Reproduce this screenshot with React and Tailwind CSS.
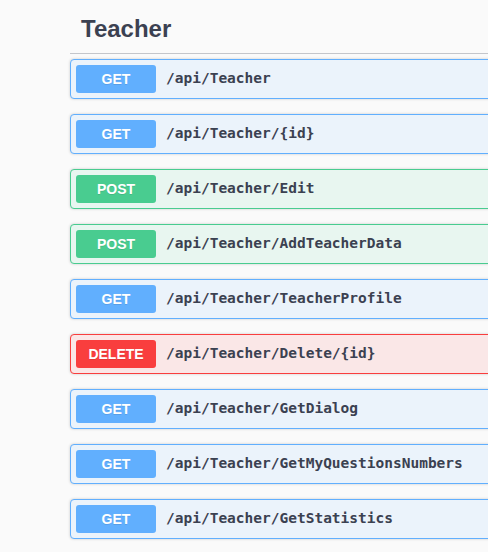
const ROUTES = [
  ['GET', '/api/Teacher'],
  ['GET', '/api/Teacher/{id}'],
  ['POST', '/api/Teacher/Edit'],
  ['POST', '/api/Teacher/AddTeacherData'],
  ['GET', '/api/Teacher/TeacherProfile'],
  ['DELETE', '/api/Teacher/Delete/{id}'],
  ['GET', '/api/Teacher/GetDialog'],
  ['GET', '/api/Teacher/GetMyQuestionsNumbers'],
  ['GET', '/api/Teacher/GetStatistics'],
]

const STYLES = {
  GET: { row: 'bg-[#ebf3fb] border-[#61affe]', badge: 'bg-[#61affe]' },
  POST: { row: 'bg-[#e8f6f0] border-[#49cc90]', badge: 'bg-[#49cc90]' },
  DELETE: { row: 'bg-[#fae7e7] border-[#f93e3e]', badge: 'bg-[#f93e3e]' },
}

export default function App() {
  return (
    <div className="w-[488px] h-[552px] overflow-hidden bg-[#fafafa]">
      <div className="w-[560px] pl-[70px]">
        <h3
          className="pt-[14px] pb-[10px] pl-[11px] text-[24px] leading-[29px] font-bold text-[#3b4151] border-b border-[#c4c6cb] mb-[5px]"
          style={{ fontFamily: '"Liberation Sans", Arial, sans-serif' }}
        >
          Teacher
        </h3>
        <div className="flex flex-col gap-[15px]">
          {ROUTES.map(([method, path]) => (
            <div
              key={path}
              className={`flex items-center p-[5px] border rounded-[4px] shadow-[0_0_3px_rgba(0,0,0,0.19)] ${STYLES[method].row}`}
            >
              <span
                className={`w-[80px] h-[28px] flex items-center justify-center rounded-[3px] text-white text-[14px] font-bold [text-shadow:0_1px_0_rgba(0,0,0,0.1)] ${STYLES[method].badge}`}
                style={{ fontFamily: '"Liberation Sans", Arial, sans-serif' }}
              >
                {method}
              </span>
              <span
                className="px-[10px] text-[14.5px] font-bold text-[#3b4151]"
                style={{ fontFamily: '"DejaVu Sans Mono", monospace' }}
              >
                {path}
              </span>
            </div>
          ))}
        </div>
      </div>
    </div>
  )
}
